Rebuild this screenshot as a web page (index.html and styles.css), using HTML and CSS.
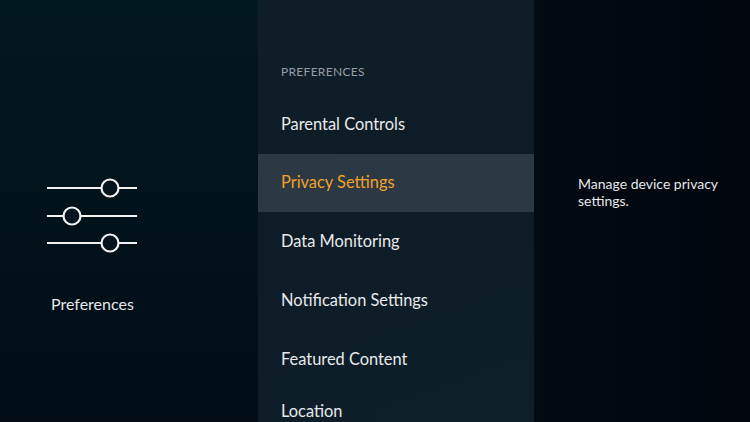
FILE: index.html
```html
<html>
    <head>
        <link rel="stylesheet" href="styles.css">
    </head>
    <body>
        <div class="screen">
            <div class="side">
                <svg class="prefs-icon" width="92" height="76" viewBox="0 0 92 76">
                    <g stroke="#f2f2f2" stroke-width="2" fill="none">
                        <line x1="0" y1="10" x2="90" y2="10"/>
                        <line x1="0" y1="38" x2="90" y2="38"/>
                        <line x1="0" y1="65" x2="90" y2="65"/>
                    </g>
                    <g stroke="#f2f2f2" stroke-width="2.2" fill="#03141d">
                        <circle cx="63" cy="10" r="8.5"/>
                        <circle cx="25" cy="38" r="8.5"/>
                        <circle cx="63" cy="65" r="8.5"/>
                    </g>
                </svg>
                <div class="side-label">Preferences</div>
            </div>

            <div class="menu">
                <div class="menu-title">PREFERENCES</div>
                <div class="item">Parental Controls</div>
                <div class="item active">Privacy Settings</div>
                <div class="item">Data Monitoring</div>
                <div class="item">Notification Settings</div>
                <div class="item">Featured Content</div>
                <div class="item last">Location</div>
            </div>

            <div class="detail">
                <p>Manage device privacy settings.</p>
            </div>
        </div>
    </body>
</html>
```

FILE: styles.css
```css
body {
    margin: 0;
    background: #01070e;
    font-family: Lato, "Open Sans", sans-serif;
    overflow: hidden;
}

.screen {
    display: flex;
    width: 750px;
    height: 422px;
}

.side {
    width: 258px;
    flex-shrink: 0;
    background: linear-gradient(180deg, #021821 0%, #02121b 55%, #010c15 100%);
    display: flex;
    flex-direction: column;
    align-items: flex-start;
    padding-top: 178px;
    box-sizing: border-box;
}

.prefs-icon {
    margin-left: 47px;
}

.side-label {
    margin-top: 40px;
    margin-left: 51px;
    color: #e6e8e9;
    font-size: 16px;
}

.menu {
    width: 276px;
    flex-shrink: 0;
    background: linear-gradient(160deg, #0f1d27 0%, #0d1c26 50%, #0e1f2a 100%);
    padding-top: 62px;
    box-sizing: border-box;
}

.menu-title {
    color: #979da2;
    font-size: 12px;
    letter-spacing: 0.3px;
    line-height: 20px;
    padding-left: 23px;
    margin-bottom: 13px;
}

.item {
    height: 59px;
    line-height: 57px;
    padding-left: 23px;
    color: #e8eaeb;
    font-size: 16.4px;
}

.active {
    background: #2c3942;
    color: #f0a22c;
    height: 58px;
    line-height: 56px;
}

.last {
    margin-top: -7px;
}

.detail {
    flex: 1;
    min-width: 0;
    background: linear-gradient(90deg, #020a12 0%, #01060d 100%);
    padding: 175px 0 0 44px;
}

.detail p {
    margin: 0;
    color: #e6e8e9;
    font-size: 14px;
    line-height: 17px;
    width: 160px;
}
```
